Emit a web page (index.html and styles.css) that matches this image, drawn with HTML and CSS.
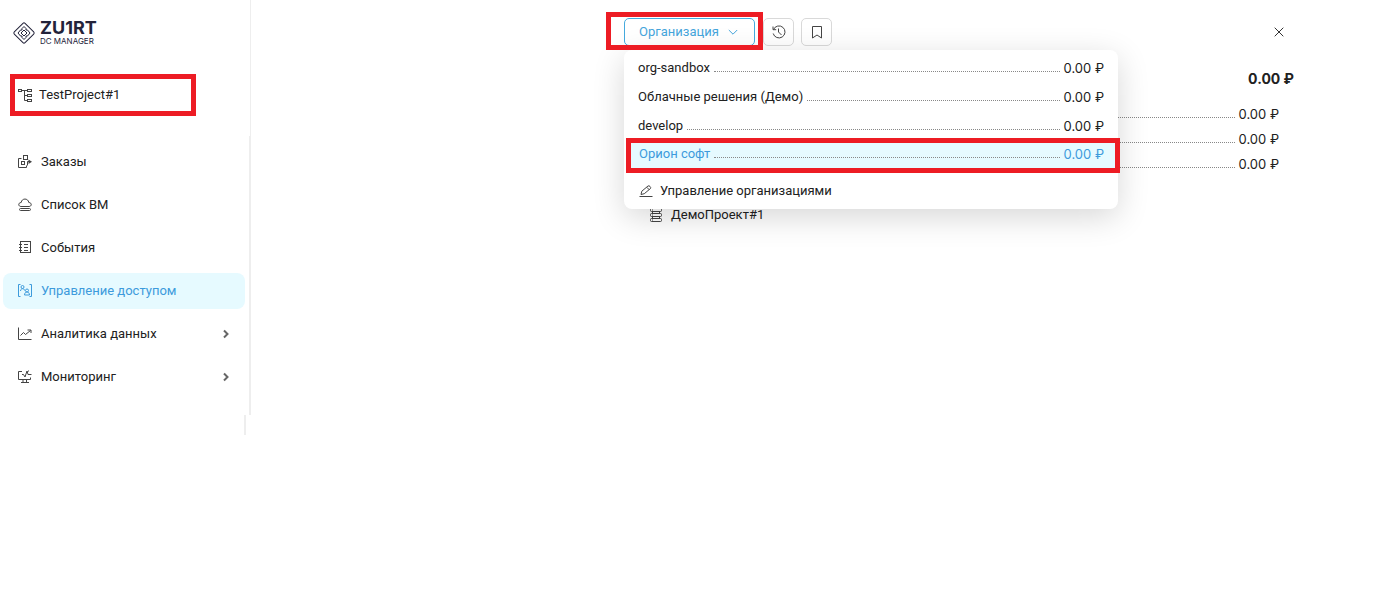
FILE: index.html
```html
<!DOCTYPE html>
<html lang="ru">
<head>
    <meta charset="UTF-8">
    <meta name="viewport" content="width=device-width, initial-scale=1.0">
    <title>DC Manager</title>
    <link rel="stylesheet" href="styles.css">
</head>
<body>
    <div class="page">
        <aside class="sidebar">
            <div class="sidebar-top">
                <a class="logo" href="#">
                    <svg class="logo-mark" viewBox="0 0 24 24" aria-hidden="true">
                        <rect x="4.4" y="4.4" width="15.2" height="15.2" rx="1.5" transform="rotate(45 12 12)"/>
                        <path d="M12 5.500l2 2v1.500h1.500l2.500 3-2.500 3h-1.500v1.500l-2 2-2-2V15H8.500L6 12l2.500-3H10V7.500z"/>
                        <path d="M12 9l3 3-3 3-3-3z"/>
                    </svg>
                    <span class="logo-text">
                        <span class="logo-name">ZU1RT</span>
                        <span class="logo-sub">DC MANAGER</span>
                    </span>
                </a>
                <a class="project marked" href="#">
                    <svg class="icon" viewBox="0 0 16 16" aria-hidden="true">
                        <rect x="1.500" y="2.500" width="3" height="2"/>
                        <rect x="10.500" y="2.500" width="4" height="2"/>
                        <rect x="10.500" y="7.500" width="4" height="2"/>
                        <rect x="10.500" y="12.500" width="4" height="2"/>
                        <path d="M4.500 3.500h6M7.500 3.500v10h3M7.500 8.500h3"/>
                    </svg>
                    <span>TestProject#1</span>
                </a>
            </div>

            <nav class="menu">
                <a class="menu-item" href="#">
                    <svg class="icon" viewBox="0 0 16 16" aria-hidden="true">
                        <path d="M4.500 4.500h-3v9h8v-2"/>
                        <rect x="6.500" y="1.500" width="4" height="4"/>
                        <rect x="4.500" y="7.500" width="3" height="3"/>
                        <path d="M10.500 11.500v-4h2"/>
                        <path d="M11.500 5.500l3.500 2.200-3.500 2.200z" class="solid"/>
                    </svg>
                    <span>Заказы</span>
                </a>
                <a class="menu-item" href="#">
                    <svg class="icon" viewBox="0 0 16 16" aria-hidden="true">
                        <path d="M4 9.500C1 9.500 1 5.500 4.200 5.500c.5-4.600 7-4.600 7.600 0 3.200 0 3.200 4 .2 4z"/>
                        <rect x="2.500" y="11.500" width="11" height="2" rx="1"/>
                    </svg>
                    <span>Список ВМ</span>
                </a>
                <a class="menu-item" href="#">
                    <svg class="icon" viewBox="0 0 16 16" aria-hidden="true">
                        <rect x="3.500" y="1.500" width="10" height="11"/>
                        <path d="M2 4.500h3M2 7.500h3M2 10.500h3M7 4.500h4M7 7.500h4M7 10.500h4"/>
                    </svg>
                    <span>События</span>
                </a>
                <a class="menu-item active" href="#">
                    <svg class="icon" viewBox="0 0 16 16" aria-hidden="true">
                        <path d="M3.500 1.500h-2v12h2M12.500 1.500h2v12h-2"/>
                        <circle cx="5.500" cy="4" r="1.500"/>
                        <path d="M3.500 8c0-3 4-3 4-.5"/>
                        <circle cx="10" cy="7.500" r="1.500"/>
                        <path d="M7.500 12c0-4 5-4 5 0z"/>
                    </svg>
                    <span>Управление доступом</span>
                </a>
                <a class="menu-item" href="#">
                    <svg class="icon" viewBox="0 0 16 16" aria-hidden="true">
                        <path d="M1.500 1.500v12h13"/>
                        <path d="M3.500 9.500l3-3 2 2 5-4M10.500 4h3.500v3"/>
                    </svg>
                    <span>Аналитика данных</span>
                    <svg class="chevron" viewBox="0 0 10 10" aria-hidden="true"><path d="M3 1.500L6.500 5 3 8.500"/></svg>
                </a>
                <a class="menu-item" href="#">
                    <svg class="icon" viewBox="0 0 16 16" aria-hidden="true">
                        <path d="M5 2.500H1.500v8h12v-2M6 10.500v3M9.500 10.500v3M4 13.500h8"/>
                        <path d="M5 5.500h1.500L8 8l2-6 1 3.500h3.500M11.500 1.500l-1 2"/>
                    </svg>
                    <span>Мониторинг</span>
                    <svg class="chevron" viewBox="0 0 10 10" aria-hidden="true"><path d="M3 1.500L6.500 5 3 8.500"/></svg>
                </a>
            </nav>
            <div class="sidebar-end"></div>
        </aside>

        <main class="panel">
            <div class="toolbar">
                <div class="org marked">
                    <button class="org-btn" type="button" aria-expanded="true">
                        Организация
                        <svg class="arrow" viewBox="0 0 10 10" aria-hidden="true"><path d="M.8 3L5 7.200 9.200 3"/></svg>
                    </button>
                </div>
                <button class="icon-btn" type="button" aria-label="История">
                    <svg class="icon" viewBox="0 0 16 16" aria-hidden="true">
                        <path d="M2.500 5.500A6 6 0 1 1 2.200 9.500M2 2.500v3.200h3.200M7.500 4.500V8l3 3"/>
                    </svg>
                </button>
                <button class="icon-btn" type="button" aria-label="Закладки">
                    <svg class="icon" viewBox="0 0 16 16" aria-hidden="true"><path d="M3.500 2.500h9v11.500L8 11l-4.500 3z"/></svg>
                </button>
                <button class="close-btn" type="button" aria-label="Закрыть">
                    <svg viewBox="0 0 10 10" aria-hidden="true"><path d="M.7.7l8.600 8.600M9.300.7L.7 9.300"/></svg>
                </button>
            </div>

            <div class="dropdown">
                <a class="org-row" href="#"><span>org-sandbox</span><i class="dots"></i><span class="sum">0.00 ₽</span></a>
                <a class="org-row" href="#"><span>Облачные решения (Демо)</span><i class="dots"></i><span class="sum">0.00 ₽</span></a>
                <a class="org-row" href="#"><span>develop</span><i class="dots"></i><span class="sum">0.00 ₽</span></a>
                <a class="org-row selected marked" href="#"><span>Орион софт</span><i class="dots"></i><span class="sum">0.00 ₽</span></a>
                <a class="manage" href="#">
                    <svg class="icon" viewBox="0 0 16 16" aria-hidden="true">
                        <path d="M3 11.500l.8-3.300 6.200-5.200c1-1 3.500 1.300 2.500 2.500l-6.200 5.200zM8.800 4.300l2.500 2.500M1.500 13.500h13"/>
                    </svg>
                    <span>Управление организациями</span>
                </a>
            </div>

            <div class="total">0.00 ₽</div>
            <div class="costs">
                <div class="cost-row"><i class="dots"></i><span class="sum">0.00 ₽</span></div>
                <div class="cost-row"><i class="dots"></i><span class="sum">0.00 ₽</span></div>
                <div class="cost-row"><i class="dots"></i><span class="sum">0.00 ₽</span></div>
            </div>
            <a class="demo-project" href="#">
                <svg class="icon" viewBox="0 0 16 16" aria-hidden="true">
                    <rect x="2.500" y="1.500" width="11" height="3" rx="1"/>
                    <rect x="2.500" y="6.500" width="11" height="3" rx="1"/>
                    <rect x="2.500" y="11.500" width="11" height="3" rx="1"/>
                    <path d="M4 3h1M4 8h1M4 13h1M4.500 4.500v2M11.500 4.500v2M4.500 9.500v2M11.500 9.500v2"/>
                </svg>
                <span>ДемоПроект#1</span>
            </a>
        </main>
    </div>
</body>
</html>
```
FILE: styles.css
```css
* {
    box-sizing: border-box;
}

body {
    margin: 0;
    background: #fff;
    color: #212121;
    font-family: Roboto, "Liberation Sans", sans-serif;
    font-size: 13px;
    line-height: 20px;
}

a {
    color: inherit;
    text-decoration: none;
}

button {
    padding: 0;
    background: #fff;
    font: inherit;
    cursor: pointer;
}

svg {
    flex: none;
    fill: none;
    stroke: currentColor;
}

.icon {
    width: 16px;
    height: 16px;
    color: #444;
}

.solid {
    fill: currentColor;
    stroke: none;
}

.sum,
.total {
    font-family: Inter, "Liberation Sans", sans-serif;
}

.page {
    display: flex;
    justify-content: space-between;
}

/* red frame around a step of the guide */
.marked {
    position: relative;
}

.marked::after {
    content: "";
    position: absolute;
    inset: 0;
    z-index: 3;
    border: 5px solid #ed1c24;
    pointer-events: none;
}

/* Sidebar */
.sidebar {
    width: 251px;
    flex: none;
}

.sidebar-top {
    height: 136px;
    padding: 20px 10px 0;
    border-right: 1px solid #eee;
}

.logo {
    display: flex;
    align-items: center;
    gap: 4px;
    height: 26px;
    padding-left: 2px;
    color: #23233a;
}

.logo-mark {
    width: 24px;
    height: 24px;
}

.logo-text {
    display: flex;
    flex-direction: column;
    font-family: Inter, "Liberation Sans", sans-serif;
}

.logo-name {
    font-size: 18px;
    font-weight: 700;
    line-height: 16px;
}

.logo-sub {
    font-size: 8px;
    line-height: 10px;
}

.project {
    display: flex;
    align-items: center;
    gap: 6px;
    width: 186px;
    height: 42px;
    margin-top: 28px;
    padding-left: 7px;
}

.menu {
    display: flex;
    flex-direction: column;
    gap: 7px;
    height: 279px;
    padding: 8px 4px 0 3px;
    border-right: 2px solid #eee;
}

.menu-item {
    display: flex;
    align-items: center;
    gap: 8px;
    height: 36px;
    padding: 0 14px;
    border-radius: 8px;
}

.active {
    background: #e6faff;
    color: #3d9bdc;
}

.active .icon {
    color: #3d9bdc;
}

.chevron {
    width: 10px;
    height: 10px;
    margin-left: auto;
    color: #666;
    stroke-width: 2;
}

.sidebar-end {
    width: 246px;
    height: 20px;
    border-right: 2px solid #eee;
}

/* Panel */
.panel {
    position: relative;
    flex: 0 1 670px;
    margin-right: 91px;
    padding-top: 12px;
}

.toolbar {
    display: flex;
    align-items: center;
    gap: 7px;
    height: 38px;
}

.org {
    margin: 0 -7px 0 -18px;
    padding: 6px 8px 4px 18px;
}

.org-btn {
    display: flex;
    align-items: center;
    justify-content: space-between;
    width: 131px;
    height: 28px;
    padding: 0 16px 0 14px;
    border: 1px solid #45aade;
    border-radius: 5px;
    color: #45a5dc;
}

.arrow {
    width: 10px;
    height: 10px;
}

.icon-btn {
    display: flex;
    align-items: center;
    justify-content: center;
    width: 31px;
    height: 28px;
    margin-top: 2px;
    border: 1px solid #d9d9d9;
    border-radius: 5px;
}

.close-btn {
    display: flex;
    margin: 2px 10px 0 auto;
    border: 0;
    color: #333;
}

.close-btn svg {
    width: 10px;
    height: 10px;
}

.dropdown {
    position: absolute;
    top: 50px;
    left: 0;
    z-index: 2;
    width: 494px;
    height: 159px;
    padding-top: 3px;
    border-radius: 8px;
    background: #fff;
    box-shadow: 0 8px 32px rgba(0, 0, 0, 0.16);
}

.dots {
    flex: 1;
    margin: 0 4px;
    border-bottom: 1px dotted #888;
}

.org-row {
    display: flex;
    height: 29px;
    padding: 5px 14px;
}

.org-row .dots,
.cost-row .dots {
    height: 14px;
}

.selected {
    height: 35px;
    margin: -2px -2px 0 2px;
    padding: 6px 16px 0 13px;
    background: #e6faff;
    color: #3d9bdc;
}

.manage {
    display: flex;
    align-items: center;
    gap: 6px;
    height: 36px;
    padding-left: 14px;
}

.total {
    margin-top: 19px;
    font-size: 14px;
    font-weight: 700;
    text-align: right;
}

.costs {
    padding: 13px 15px 0 0;
}

.cost-row {
    display: flex;
    height: 25px;
    padding-top: 2px;
}

.demo-project {
    display: flex;
    align-items: center;
    gap: 7px;
    margin-top: 28px;
    padding-left: 24px;
}
```
